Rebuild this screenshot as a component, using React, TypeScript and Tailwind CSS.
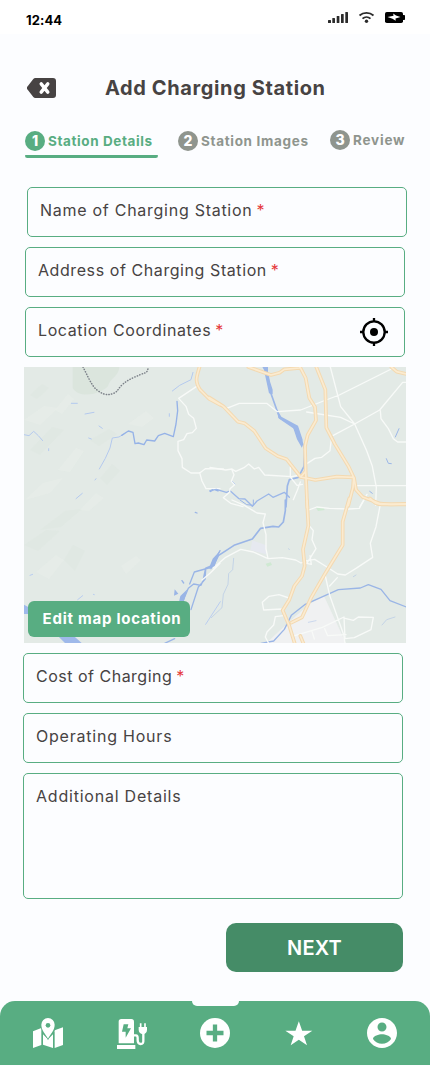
import React from "react";

const BackIcon = () => (
  <svg width="30" height="20" viewBox="0 0 30 20" className="shrink-0">
    <path d="M8.5 0H26a3 3 0 0 1 3 3v14a3 3 0 0 1-3 3H8.500a3 3 0 0 1-2.200-.9L.5 11.500a2 2 0 0 1 0-3L6.300.9A3 3 0 0 1 8.500 0z" fill="#474343" />
    <path d="M14.200 5.900l6.600 8.200M20.800 5.900l-6.600 8.200" stroke="#fff" strokeWidth="3.400" strokeLinecap="round" />
  </svg>
);

const StatusIcons = () => (
  <svg width="80" height="14" viewBox="327 11 80 14">
    <g fill="#2b2b2b">
      <rect x="328" y="20" width="3" height="3" rx=".5" />
      <rect x="332.300" y="18" width="2.700" height="5" rx=".5" />
      <rect x="336.700" y="16" width="2.700" height="7" rx=".5" />
      <rect x="341" y="14" width="2.700" height="9" rx=".5" />
      <rect x="345.300" y="12" width="2.700" height="11" rx=".5" />
      <circle cx="366.500" cy="21.300" r="1.700" />
    </g>
    <path d="M359.500 15.500a10.500 10.500 0 0 1 14 0M362.500 18.600a6 6 0 0 1 8 0" fill="none" stroke="#2b2b2b" strokeWidth="1.800" />
    <rect x="385" y="12" width="18" height="11" rx="1.800" />
    <rect x="402.500" y="15" width="2.500" height="5" rx=".8" />
    <path d="M387.500 17l6-1.300-.3-2.200 2.800 2 4.500 1.600-5 1.300.2 2.400-3.200-2.100z" fill="#fff" />
  </svg>
);

const TargetIcon = () => (
  <svg width="28" height="28" viewBox="0 0 28 28" className="shrink-0">
    <circle cx="14" cy="14" r="10.700" fill="none" stroke="#000" strokeWidth="2.300" />
    <circle cx="14" cy="14" r="4" />
    <path d="M14 0v4M14 24v4M0 14h4M24 14h4" stroke="#000" strokeWidth="2.300" />
  </svg>
);

type StepProps = { n: number; label: string; tone: string; text: string; className: string };
const Step = ({ n, label, tone, text, className }: StepProps) => (
  <div className={`flex h-5 items-center ${className}`}>
    <span className={`flex size-5 shrink-0 items-center justify-center rounded-full text-[14px] leading-5 font-extrabold text-white ${tone}`}>{n}</span>
    <span className={`ml-[3px] text-[13.5px] leading-5 font-bold whitespace-nowrap ${text}`}>{label}</span>
  </div>
);

type FieldProps = { label: string; required?: boolean; spacing: string; className?: string; children?: React.ReactNode };
const Field = ({ label, required, spacing, className = "h-[50px]", children }: FieldProps) => (
  <div className={`flex w-[380px] justify-between rounded-[5px] border border-[#58ad82] pr-4 pl-3 ${className}`}>
    <div className={`pt-[11px] text-[16px] leading-[22px] text-[#474343] whitespace-nowrap ${spacing}`}>
      {label}
      {required && <span className="ml-1 tracking-normal text-[#e5383b]">*</span>}
    </div>
    {children}
  </div>
);

const terrain = [
  "M24 420l20-14 14 2-18 17z", "M30 450l22-23 12 3-24 25z", "M25 500l18-17 20-5-13 15z", "M40 530l25-19 17-2-21 18z",
  "M58 470l18-22 8 3-14 21z", "M24 545l22-15 14 1-22 20z", "M36 572l20-17 8 5-15 19z", "M64 560l9-15 12 6-10 20z",
  "M80 510l16-17 8 5-15 13z", "M90 440l19-11 8 5-18 12z", "M128 424l18-13 8 7-12 9z", "M100 478l12-14 8 7-13 14z",
  "M121 566l15-10 5 4-15 14z", "M30 395l12-11 7 4-12 11z", "M55 410l13-16 6 5-12 15z",
];

const MapView = () => (
  <svg width="382" height="276" viewBox="24 367 382 276" className="block" fill="none" strokeLinejoin="round" strokeLinecap="round">
    <rect x="24" y="367" width="382" height="276" fill="#e3eae6" />
    <g>
      {terrain.map((d, i) => (
        <path key={d} d={d} fill={i % 2 ? "#dce5df" : "#ebf0ec"} opacity=".4" />
      ))}
    </g>
    <g transform="translate(20 362) scale(.33333)">
      <path d="M158 15h140c-2 30-28 32-34 58-30 30-92 34-106 4z" fill="#dbe5dd" />
      <path d="M189 15c12 22 25 56 42 69 12 10 24 14 34 14 30-5 23-12 42-30 18-17 40-23 58-32 18-5 15-5 21-21" stroke="#7c8189" strokeWidth="4.500" strokeDasharray="1 7" />
      <g stroke="#b4c9ee" strokeWidth="3">
        <path d="M457 87l22-17 34-17 6-22M12 218l15 3 14-13 14 13 13 15M154 124h18M195 156l27-5M237 192l10 7M206 228l8 3M86 260v6M238 321l18-32 14-31 7-30 20-3 18-11M168 410l19-16M225 354l3-4M448 155v8" />
      </g>
      <path d="M305 220l20-13 14 4 6 34 10-2 17 5 8-14 24 3 11-16 19-7 26 10 8-38 5-40-2-28" stroke="#95b2e7" strokeWidth="4" />
      <path d="M530 73l-54 36 22 24 8 24 15 12 8 30-12 13-16 3-10 18-17 5v28l12 24 1 26 26 17h26l17-13 54 1M539 332l7 25 12 23h42" stroke="#f8faf8" strokeWidth="4" />
      <path d="M571 388l7-4M588 384l6 2" stroke="#95b2e7" strokeWidth="5" />
    </g>
    <g transform="translate(210 500) scale(.33333)">
      <path d="M168 430l60-56 70-62 44-24 66 142z" fill="#f0f1f2" />
      <path d="M127 121l42 15-1 27-47-13z" fill="#e6e9f0" />
      <path d="M167 191l15-4 4 8-14 5zM318 23l22-2 4 9-20 3z" fill="#cfe9d2" />
      <g stroke="#9ab5e6">
        <path d="M0 204l12-11 13-26 47-31 55-19 25-32 37-6 17 2 14-15 6-34V0" strokeWidth="5" />
        <path d="M0 204l9-15 7-16 9-8-13 30-8 12z" fill="#9ab5e6" />
        <path d="M90 0l20 14 20 2V0" strokeWidth="3" />
        <path d="M153 430l38-7 32-35 21-42 40-32 34-15 67-30 66-5 24-10 38 14 27 34 49 19" strokeWidth="4" />
        <path d="M4 353l32-30 4-40 14-30 2-32 12-12 3-34M295 367l23-5M430 230l8-5M516 375l14-16 25-8M236 146l2 3" strokeWidth="2" opacity=".65" />
      </g>
      <g stroke="#f8faf8" strokeWidth="4">
        <path d="M10 204l37-32 45-24 38 8 44 20 43-3 40 7 16 9 18-7 23-4 32 20 37 24 23 3 32-20 50-33-7-42 17-50 12-62M296 30l24-9 38 4 58 2 32-2 14-25M174 176l-6-29v-43l-9-36 7-26-25-3-38-23-37-16M300 80l10 12-4 27 12 27-18 29-10 15 14 3-4-26M344 219l15 67 42 118 4 26M359 258l23-25M237 294l-30-10-30 5-20 18 4 23 54-3 7 2M226 346l-30 4-5 25-20 21-5 15 10 19M247 409l90-27 65-31 3 65 28-3 50-24 7-37-45-1-15 10-25-6M306 394l7 23M344 386l9 21 55-3" />
      </g>
    </g>
    <g transform="translate(210 362) scale(.33333)">
      <path d="M160 15l14 21 6 50 29 82 44 30 17 29 14 34-2 52-17 33-27 7-6 19-4 63" stroke="#9cb7e8" strokeWidth="5" />
      <path d="M160 15h14v25l14 43v14l-11-3zM202 144l12 20 50 27 14 42-2 25-15-26-13-39-43-25z" fill="#9cb7e8" />
      <path d="M0 386l19-4 30 9 12-4 26 23 18 1 22 22 14-16 35-21 13 10 34-15 15 15" stroke="#9cb7e8" strokeWidth="4" />
      <path d="M67 358l8 8M556 225l11-25M529 290l6 14 9 1M479 388l8 6" stroke="#9cb7e8" strokeWidth="3" />
      <path d="M0 316l47 8 19-3 11 7 25-11 14-11 17 15 13-5 18 23 81 5 26-5M66 324l6 14-8 20 10 10-14 12-1 10-19 17 22 17 37 10M50 139l38-15h82l32 25 70-5 76-30 40-15 156-78M361 15l31 119 42 52 36 80 17 47 12 63-2 54M370 220l64-34 75-42 69-83h10M511 146l2 24 22 30 15 30 13 10h25M287 307l28-18 20-3 25-20 5-44M290 150l102 16 42 20M440 371h148M241 315v30l20 25 16-3M250 413l12-28 9-25M471 397l-22 38" stroke="#f8faf8" strokeWidth="4" />
    </g>
    {[{ c: "#f3d9b1", w: 11 }, { c: "#fbebd0", w: 5 }].map(({ c, w }) => (
      <g key={c} stroke={c} strokeWidth={w}>
        <g transform="translate(20 362) scale(.33333)">
          <path d="M540 10c-10 35-17 45 0 73l28 28 32 17" />
        </g>
        <g transform="translate(210 362) scale(.33333)">
          <path d="M-3 106l43 27 44 46 20 5 29 23 34 52 37 24 26 9 42 53 15-17-2-76 8-33 25-44-3-40-17-27-11-60-13-25-5-10V15M115 15l68 24 26-7 14-10 45-4M318 13l28 70 3 114 26 50 41 67 15 32-2 30-14 55M544 15l16 14 33 8M272 345l44 9 64-10 51 2M432 347l6 36 20 22 53 20 32 2 60-2M287 328l5 110" />
        </g>
        <g transform="translate(210 500) scale(.33333)">
          <path d="M291 0l4 77-16 71 5 50-8 30-23 30-15 41-20 32 20 47 17 55M418-5l-20 70v70l-51 83-43 74-28 60-32 16M480-5c12 10 15 19 39 18h75M271 408l10 24" />
        </g>
      </g>
    ))}
    <g transform="translate(20 500) scale(.33333)">
      <path d="M600 152l-23 44-20 8-8 38-6 14-22-4-16 13-17 40M566 204l-43 12-14 36M557 210l-2 28-20 23-22 68M486 242l5 7M526 37l5 2M434 430l30-14" stroke="#9ab5e6" strokeWidth="4" />
      <path d="M601 305l-44 68" stroke="#bacdf0" strokeWidth="3" />
      <path d="M600 152l-22 24-12 30 18-8zM502 268l-21 20-4 18h14zM464 268l11 13-13 6z" fill="#9ab5e6" />
      <path d="M12 314l14 8v20H12zM116 410h48l22 20h-50z" fill="#9fb9ea" />
      <path d="M30 226l8-3M173 299l15-12M220 283l3 1" stroke="#bacdf0" strokeWidth="3" />
      <path d="M600 190l-30 30-24 20" stroke="#f8faf8" strokeWidth="4" />
    </g>
  </svg>
);

const MapPinIcon = () => (
  <svg width="30" height="30" viewBox="99 323 90 90" fill="#fff">
    <path d="M99 363l25-10v51l-25 9zM189 351v53l-25 9v-47q-2-8 4-8zM129 372l15 15 15-15v41l-30-10z" />
    <path d="M144 323a20 20 0 0 1 20 20c0 17-13 28-20 42-7-14-20-25-20-42a20 20 0 0 1 20-20z" stroke="#58ad82" strokeWidth="4" paintOrder="stroke" />
    <circle cx="144" cy="345" r="7" fill="#58ad82" />
  </svg>
);

const ChargerIcon = () => (
  <svg width="31" height="31" viewBox="348 327 93 93" fill="none" className="-mr-px">
    <path d="M353 403v-65q0-8 8-8h30q8 0 8 8v65z" fill="#fff" />
    <path d="M348 408h55v12h-55z" fill="#fff" />
    <path d="M368 346h14l-3 12h11l-16 28v-18h-11z" fill="#58ad82" />
    <path d="M398 379h7q5 0 5 8v7q0 11 9 11t8-11v-24" stroke="#fff" strokeWidth="7" />
    <path d="M413 354h25v8q0 11-12 14-13-3-13-14z" fill="#fff" />
    <path d="M419 343v14M432 343v14" stroke="#fff" strokeWidth="5" />
  </svg>
);

const PlusIcon = () => (
  <svg width="30" height="30" viewBox="0 0 30 30">
    <circle cx="15" cy="15" r="15" fill="#fff" />
    <path d="M15 6.500v17M6.500 15h17" stroke="#58ad82" strokeWidth="4.300" />
  </svg>
);

const StarIcon = () => (
  <svg width="30" height="30" viewBox="206 323 90 90">
    <path d="M250.500 333l10 28h30.500l-25 17 9 27-24.500-16.500L226 405l9-27-25-17h30.500z" fill="#fff" />
  </svg>
);

const AccountIcon = () => (
  <svg width="30" height="30" viewBox="2 2 20 20">
    <path fill="#fff" d="M12 2C6.480 2 2 6.480 2 12s4.480 10 10 10 10-4.480 10-10S17.520 2 12 2zm0 3c1.660 0 3 1.340 3 3s-1.340 3-3 3-3-1.340-3-3 1.340-3 3-3zm0 14.200c-2.500 0-4.710-1.280-6-3.220.03-1.990 4-3.080 6-3.080 1.990 0 5.970 1.090 6 3.080-1.290 1.940-3.500 3.220-6 3.220z" />
  </svg>
);

export default function App() {
  return (
    <div className="h-[1066px] w-[430px] bg-[#fcfdff]">
      <div className="flex h-[1065px] flex-col overflow-hidden font-['Inter',sans-serif]">
        <div className="flex h-[34px] shrink-0 items-start justify-between bg-white pt-[11px] pr-[23px] pl-[26px]">
          <span className="text-[13px] leading-[18px] font-bold tracking-[0.1px] text-black">12:44</span>
          <StatusIcons />
        </div>

        <header className="mt-[39px] flex h-[30px] shrink-0 items-center pl-[27px]">
          <BackIcon />
          <h1 className="ml-12 text-[20px] leading-[30px] font-bold tracking-[0.61px] whitespace-nowrap text-[#474343]">Add Charging Station</h1>
        </header>

        <div className="mt-[27px] flex h-[28px] shrink-0 items-start">
          <div className="ml-[25px] w-[133px] pt-px">
            <Step n={1} label="Station Details" tone="bg-[#58ad82]" text="text-[#58ad82] tracking-[0.6px]" className="" />
            <div className="mt-1 h-[3px] rounded-t-[1px] rounded-b-[3px] bg-[#58ad82]" />
          </div>
          <Step n={2} label="Station Images" tone="bg-[#8f958e]" text="text-[#8f958e] tracking-[0.67px]" className="mt-px ml-5 w-[132px]" />
          <Step n={3} label="Review" tone="bg-[#8f958e]" text="text-[#8f958e] tracking-[0.8px]" className="ml-5" />
        </div>

        <main className="mt-[29px] flex shrink-0 flex-col gap-2.5 pl-[23px]">
          <Field label="Name of Charging Station" required spacing="tracking-[0.73px]" className="ml-1 h-[50px]" />
          <Field label="Address of Charging Station" required spacing="tracking-[0.58px]" className="ml-0.5 h-[50px]" />
          <Field label="Location Coordinates" required spacing="tracking-[0.6px]" className="ml-0.5 h-[50px]">
            <div className="flex h-full items-center">
              <TargetIcon />
            </div>
          </Field>
          <div className="relative ml-px h-[276px] w-[382px]">
            <MapView />
            <button className="absolute bottom-1.5 left-1 h-9 w-[162px] rounded-[6px] bg-[#58ad82] pl-1.5 text-[15px] leading-9 font-bold tracking-[0.75px] whitespace-nowrap text-white">Edit map location</button>
          </div>
          <Field label="Cost of Charging" required spacing="tracking-[0.5px]" />
          <Field label="Operating Hours" spacing="tracking-[0.78px]" />
          <Field label="Additional Details" spacing="tracking-[0.78px]" className="h-[126px]" />
        </main>

        <button className="mt-6 ml-[226px] h-[49px] w-[177px] shrink-0 rounded-[10px] bg-[#458c67] pt-0.5 text-[20px] leading-[47px] font-semibold tracking-[0.2px] text-white">NEXT</button>

        <nav className="relative mt-[29px] flex h-16 shrink-0 items-start justify-between rounded-t-[15px] bg-[#58ad82] px-[33px] pt-[17px]">
          <span className="absolute top-0 left-[192px] h-[5px] w-[47px] rounded-b-[5px] bg-[#fcfdff]" />
          <MapPinIcon />
          <ChargerIcon />
          <PlusIcon />
          <StarIcon />
          <AccountIcon />
        </nav>
      </div>
    </div>
  );
}
